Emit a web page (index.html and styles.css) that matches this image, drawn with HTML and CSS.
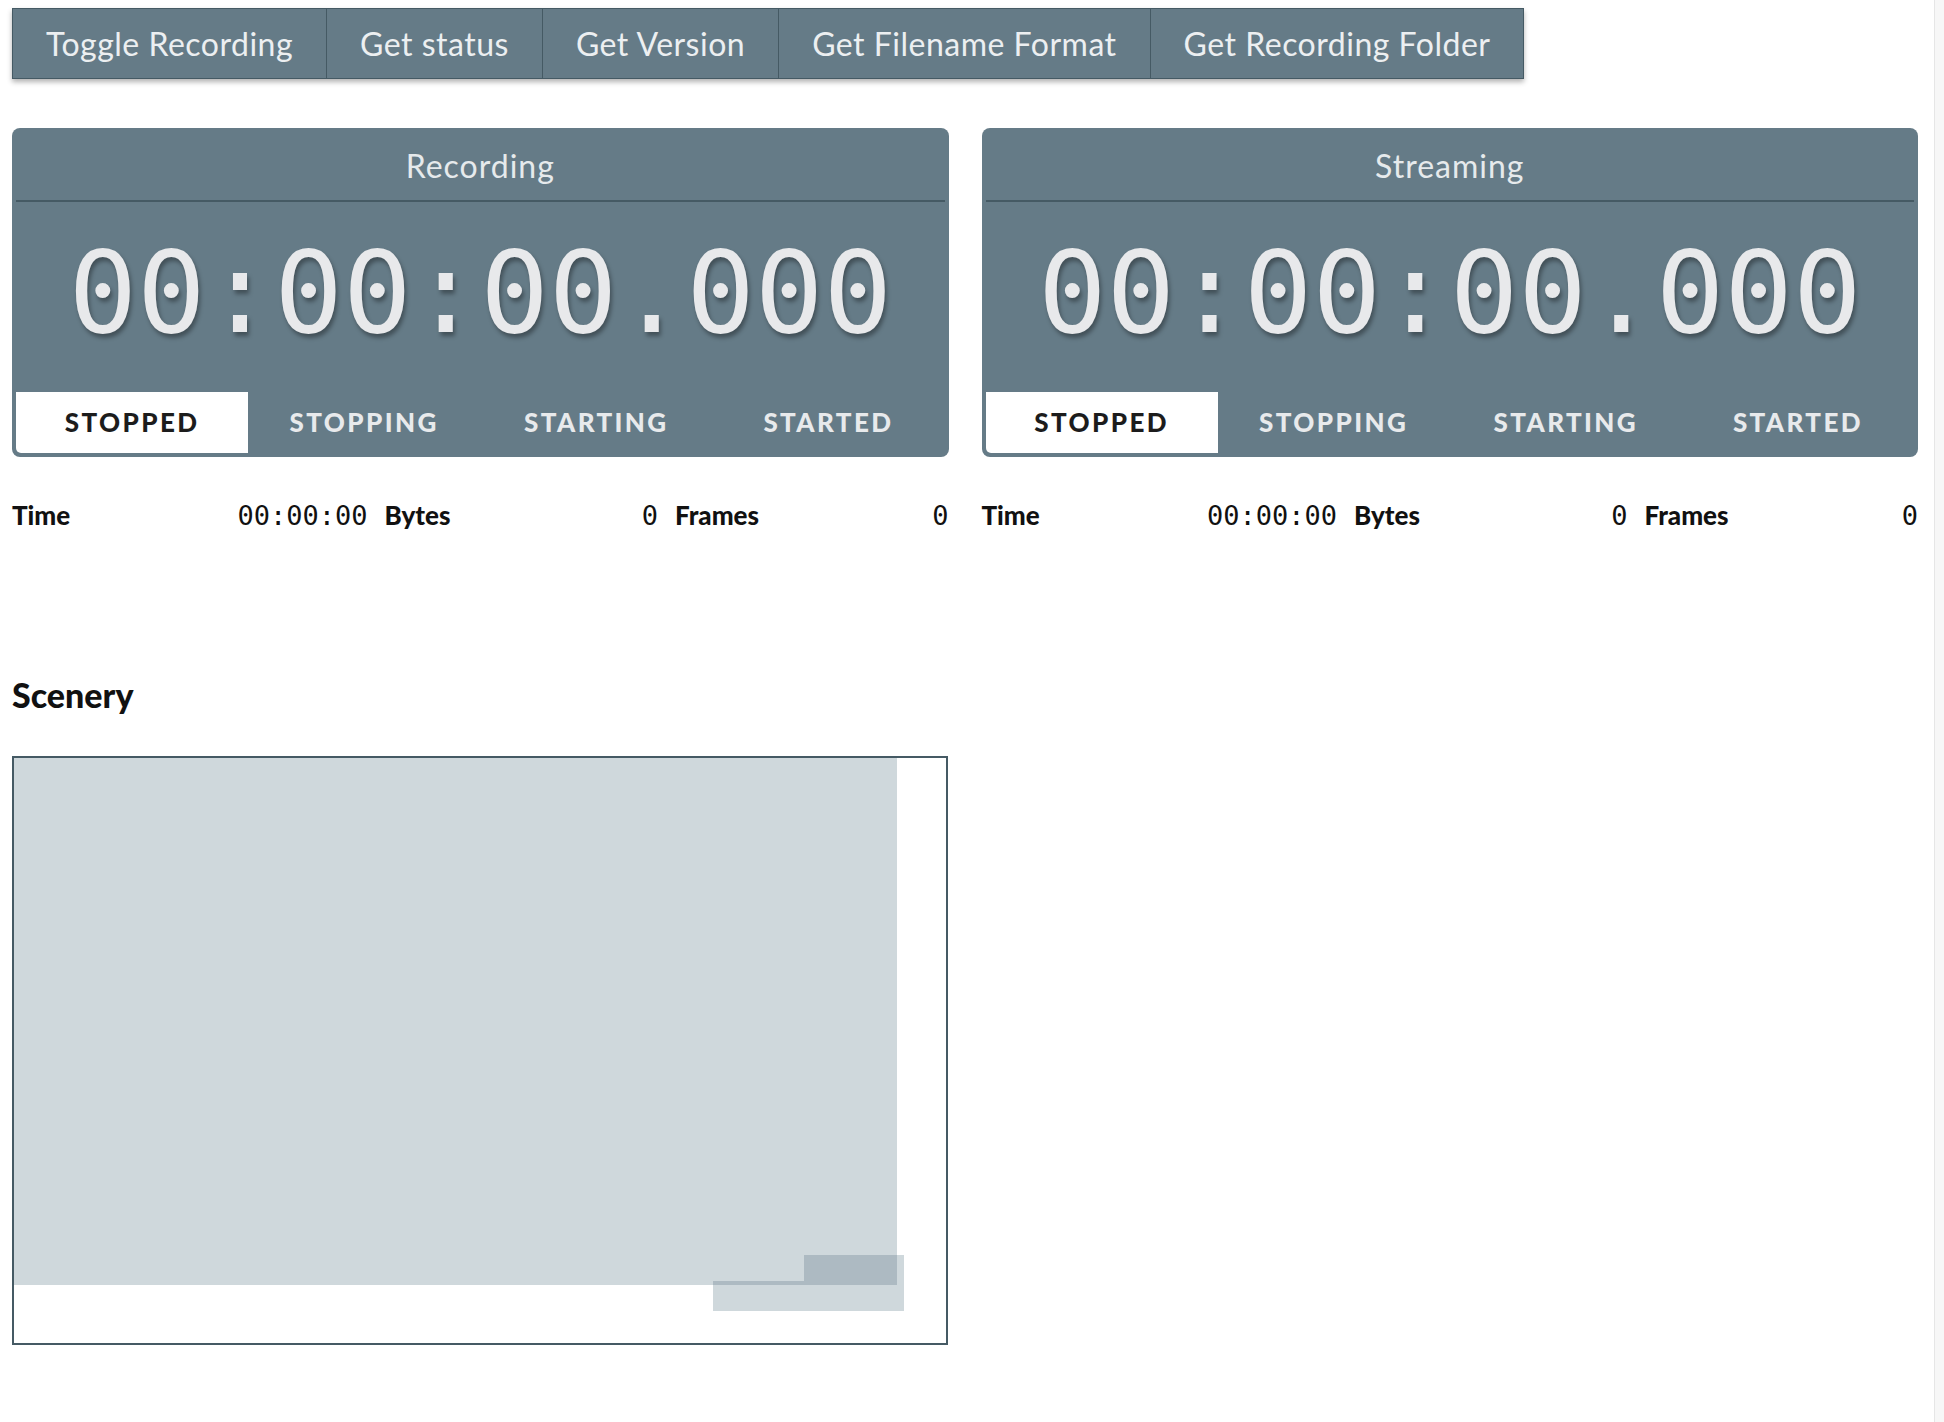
FILE: index.html
```html
<!DOCTYPE html>
<html lang="en">
<head>
<meta charset="utf-8">
<title>OBS Remote</title>
<link rel="stylesheet" href="styles.css">
</head>
<body>
<div class="page">
  <nav class="toolbar">
    <button class="tool-btn" type="button">Toggle Recording</button>
    <button class="tool-btn" type="button">Get status</button>
    <button class="tool-btn" type="button">Get Version</button>
    <button class="tool-btn" type="button">Get Filename Format</button>
    <button class="tool-btn" type="button">Get Recording Folder</button>
  </nav>

  <div class="outputs">
    <section class="output">
      <div class="panel">
        <h2 class="panel-title">Recording</h2>
        <div class="timer">00:00:00.000</div>
        <div class="states">
          <span class="state state-active">STOPPED</span>
          <span class="state">STOPPING</span>
          <span class="state">STARTING</span>
          <span class="state">STARTED</span>
        </div>
      </div>
      <dl class="stats">
        <div class="stat"><dt>Time</dt><dd>00:00:00</dd></div>
        <div class="stat"><dt>Bytes</dt><dd>0</dd></div>
        <div class="stat"><dt>Frames</dt><dd>0</dd></div>
      </dl>
    </section>

    <section class="output">
      <div class="panel">
        <h2 class="panel-title">Streaming</h2>
        <div class="timer">00:00:00.000</div>
        <div class="states">
          <span class="state state-active">STOPPED</span>
          <span class="state">STOPPING</span>
          <span class="state">STARTING</span>
          <span class="state">STARTED</span>
        </div>
      </div>
      <dl class="stats">
        <div class="stat"><dt>Time</dt><dd>00:00:00</dd></div>
        <div class="stat"><dt>Bytes</dt><dd>0</dd></div>
        <div class="stat"><dt>Frames</dt><dd>0</dd></div>
      </dl>
    </section>
  </div>

  <section class="scenery">
    <h2 class="section-title">Scenery</h2>
    <div class="scene-box">
      <svg class="scene-canvas" viewBox="0 0 932 585" width="932" height="585" aria-hidden="true">
        <rect x="0" y="0" width="883" height="527" fill="#cfd8dc"/>
        <rect x="699" y="523" width="191" height="30" fill="#cfd8dc"/>
        <rect x="790" y="497" width="100" height="26" fill="#cfd8dc"/>
        <rect x="790" y="497" width="93" height="30" fill="#adbac2"/>
        <rect x="699" y="523" width="91" height="4" fill="#adbac2"/>
      </svg>
    </div>
  </section>
</div>
<div class="scroll-track" aria-hidden="true"></div>
</body>
</html>
```

FILE: styles.css
```css
html {
  background: #ffffff;
}

body {
  margin: 0;
  padding: 8px 26px 60px 12px;
  font-family: Lato, "Noto Sans", sans-serif;
  color: #111111;
  background: #ffffff;
}

.toolbar {
  display: inline-flex;
  border: 1px solid #455a64;
  background: #657b87;
  box-shadow: 0 3px 5px rgba(0, 0, 0, 0.3);
}

.tool-btn {
  margin: 0;
  height: 69px;
  padding: 0 33px;
  border: 0;
  border-right: 1px solid #455a64;
  background: #657b87;
  color: #eceff1;
  font-family: Lato, "Noto Sans", sans-serif;
  font-size: 32px;
  letter-spacing: 0.5px;
  font-weight: 400;
  cursor: pointer;
}

.tool-btn:last-child {
  border-right: 0;
}

.outputs {
  display: grid;
  grid-template-columns: 1fr 1fr;
  column-gap: 33px;
  margin-top: 49px;
}

.panel {
  background: #657b87;
  border-radius: 8px;
  padding: 4px;
}

.panel-title {
  margin: 0;
  height: 68px;
  line-height: 68px;
  border-bottom: 2px solid #455a64;
  text-align: center;
  font-size: 32px;
  letter-spacing: 1px;
  font-weight: 400;
  color: #e6eaec;
}

.timer {
  padding: 33px 0 42px;
  font-family: "DejaVu Sans Mono", "Liberation Mono", monospace;
  font-size: 114px;
  line-height: 115px;
  text-align: center;
  color: #e8e9eb;
  text-shadow: 2px 4px 4px rgba(0, 0, 0, 0.35);
  white-space: nowrap;
}

.states {
  display: grid;
  grid-template-columns: repeat(4, 1fr);
}

.state {
  height: 61px;
  line-height: 61px;
  text-align: center;
  font-size: 26px;
  font-weight: 900;
  letter-spacing: 2.4px;
  color: #e8eaec;
}

.state-active {
  background: #ffffff;
  color: #1c1c1c;
  border-bottom-left-radius: 5px;
}

.stats {
  display: grid;
  grid-template-columns: 1.3fr 1fr 1fr;
  column-gap: 17px;
  margin: 43px 0 0;
}

.stat {
  display: flex;
  justify-content: space-between;
  align-items: baseline;
  font-size: 26px;
  line-height: 1.15;
}

.stat dt {
  font-weight: 900;
}

.stat dd {
  margin: 0;
  font-family: "DejaVu Sans Mono", "Liberation Mono", monospace;
  font-size: 27px;
}

.scenery {
  margin-top: 144px;
}

.section-title {
  margin: 0;
  font-size: 34px;
  font-weight: 900;
  line-height: 1.2;
}

.scene-box {
  margin-top: 40px;
  width: 932px;
  height: 585px;
  border: 2px solid #455a64;
  background: #ffffff;
}

.scene-canvas {
  display: block;
}

.scroll-track {
  position: fixed;
  top: 0;
  right: 0;
  bottom: 0;
  width: 9px;
  background: #f7f7f7;
  border-left: 1px solid #e6e6e6;
}
```
